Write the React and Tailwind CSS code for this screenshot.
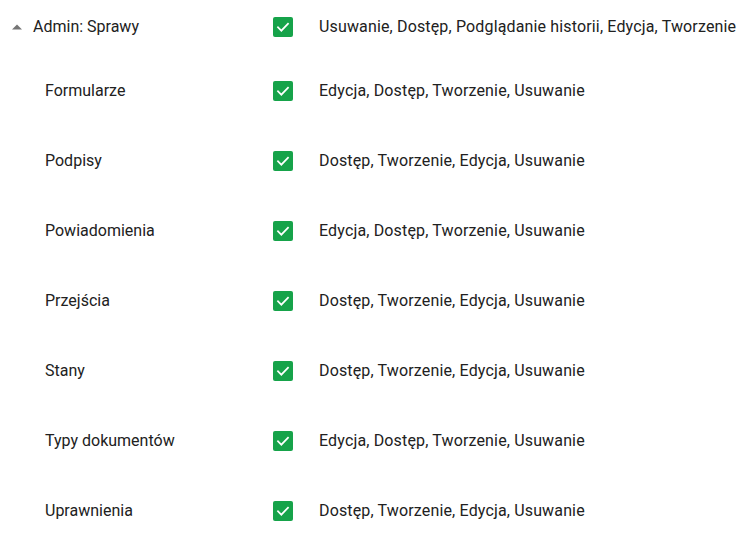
import React from "react";

const rows = [
  ["Formularze", "Edycja, Dostęp, Tworzenie, Usuwanie"],
  ["Podpisy", "Dostęp, Tworzenie, Edycja, Usuwanie"],
  ["Powiadomienia", "Edycja, Dostęp, Tworzenie, Usuwanie"],
  ["Przejścia", "Dostęp, Tworzenie, Edycja, Usuwanie"],
  ["Stany", "Dostęp, Tworzenie, Edycja, Usuwanie"],
  ["Typy dokumentów", "Edycja, Dostęp, Tworzenie, Usuwanie"],
  ["Uprawnienia", "Dostęp, Tworzenie, Edycja, Usuwanie"],
];

function Check() {
  return (
    <div className="w-5 h-5 rounded-[2px] bg-[#16a34a] flex items-center justify-center shrink-0">
      <svg width="16" height="16" viewBox="0 0 24 24">
        <path d="M4.5 12.5l5 5L19.5 7" fill="none" stroke="white" strokeWidth="2.6" strokeLinecap="square" />
      </svg>
    </div>
  );
}

export default function App() {
  return (
    <div className="w-[756px] h-[541px] bg-white overflow-hidden text-[16px] text-[#212121] pt-[1px]" style={{ fontFamily: "Roboto, sans-serif" }}>
      <div className="h-[52px] flex items-center">
        <div className="w-[273px] flex items-center shrink-0">
          <div className="w-[33px] flex justify-start pl-[12px]">
            <svg width="10" height="6" viewBox="0 0 10 6">
              <path d="M0 5.5 L5 0.5 L10 5.5 Z" fill="#757575" />
            </svg>
          </div>
          <span>Admin: Sprawy</span>
        </div>
        <Check />
        <span className="ml-[26px] whitespace-nowrap tracking-[0.15px]">Usuwanie, Dostęp, Podglądanie historii, Edycja, Tworzenie</span>
      </div>
      <div className="mt-[3px] flex flex-col">
        {rows.map(([label, perms]) => (
          <div key={label} className="h-[70px] flex items-center">
            <div className="w-[273px] pl-[45px] shrink-0">{label}</div>
            <Check />
            <span className="ml-[26px] whitespace-nowrap tracking-[0.15px]">{perms}</span>
          </div>
        ))}
      </div>
    </div>
  );
}
